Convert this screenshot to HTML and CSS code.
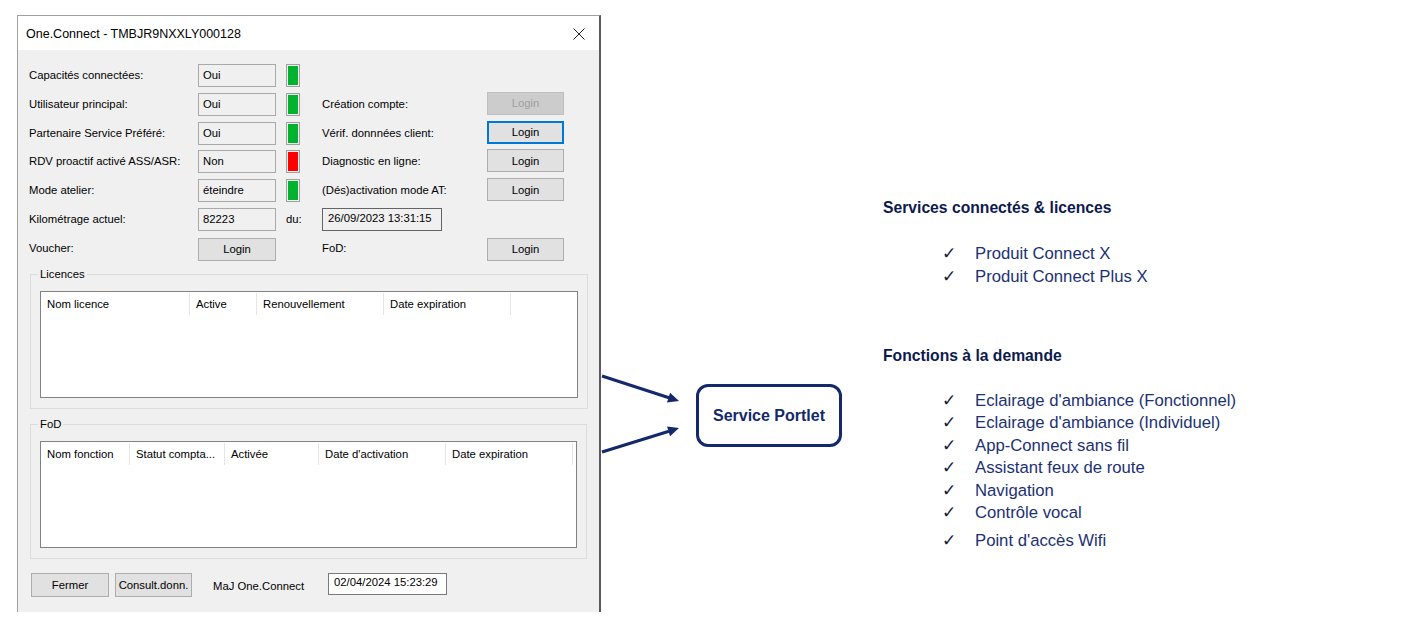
FILE: index.html
```html
<!DOCTYPE html>
<html lang="fr">
<head>
<meta charset="utf-8">
<title>One.Connect</title>
<link rel="stylesheet" href="styles.css">
</head>
<body>
<div class="page">
  <div class="window">
    <div class="titlebar">
      <span class="title">One.Connect - TMBJR9NXXLY000128</span>
      <svg class="close" width="12" height="12" viewBox="0 0 12 12"><path d="M0.5 0.5L11.5 11.5M11.5 0.5L0.5 11.5"/></svg>
    </div>
    <div class="content">
      <div class="form">
        <div class="lbl">Capacités connectées:</div>
        <div class="field">Oui</div>
        <div class="cell3"><span class="ind green"></span></div>
        <div></div><div></div>

        <div class="lbl">Utilisateur principal:</div>
        <div class="field">Oui</div>
        <div class="cell3"><span class="ind green"></span></div>
        <div class="lbl">Création compte:</div>
        <div><button class="btn disabled">Login</button></div>

        <div class="lbl">Partenaire Service Préféré:</div>
        <div class="field">Oui</div>
        <div class="cell3"><span class="ind green"></span></div>
        <div class="lbl">Vérif. donnnées client:</div>
        <div><button class="btn focus">Login</button></div>

        <div class="lbl">RDV proactif activé ASS/ASR:</div>
        <div class="field">Non</div>
        <div class="cell3"><span class="ind red"></span></div>
        <div class="lbl">Diagnostic en ligne:</div>
        <div><button class="btn">Login</button></div>

        <div class="lbl">Mode atelier:</div>
        <div class="field">éteindre</div>
        <div class="cell3"><span class="ind green"></span></div>
        <div class="lbl">(Dés)activation mode AT:</div>
        <div><button class="btn">Login</button></div>

        <div class="lbl">Kilométrage actuel:</div>
        <div class="field">82223</div>
        <div class="cell3 lbl">du:</div>
        <div><span class="datebox">26/09/2023 13:31:15</span></div>
        <div></div>

        <div class="lbl">Voucher:</div>
        <div><button class="btn wide">Login</button></div>
        <div></div>
        <div class="lbl">FoD:</div>
        <div><button class="btn lowrow">Login</button></div>
      </div>

      <fieldset class="group first">
        <legend>Licences</legend>
        <div class="list">
          <div class="lhead lic">
            <span>Nom licence</span><span>Active</span><span>Renouvellement</span><span>Date expiration</span>
          </div>
        </div>
      </fieldset>

      <fieldset class="group second">
        <legend>FoD</legend>
        <div class="list">
          <div class="lhead fod">
            <span>Nom fonction</span><span>Statut compta...</span><span>Activée</span><span>Date d'activation</span><span>Date expiration</span>
          </div>
        </div>
      </fieldset>

      <div class="bottom">
        <button class="btn b1">Fermer</button>
        <button class="btn b2">Consult.donn.</button>
        <span class="majlbl">MaJ One.Connect</span>
        <span class="datebox white">02/04/2024 15:23:29</span>
      </div>
    </div>
  </div>

  <div class="diagram">
    <svg class="arrows" width="95" height="90" viewBox="0 0 95 90">
      <line x1="1" y1="6" x2="68" y2="27.8"/>
      <polygon points="78,31 66,32.4 69.1,22.8"/>
      <line x1="1" y1="82" x2="68" y2="61.2"/>
      <polygon points="78,58 69.1,66.2 66,56.6"/>
    </svg>
    <div class="portlet">Service Portlet</div>
  </div>

  <div class="notes">
    <h2 class="heading">Services connectés &amp; licences</h2>
    <ul class="checks">
      <li><span class="tick">✓</span>Produit Connect X</li>
      <li><span class="tick">✓</span>Produit Connect Plus X</li>
    </ul>
    <h2 class="heading h2b">Fonctions à la demande</h2>
    <ul class="checks tight">
      <li><span class="tick">✓</span>Eclairage d'ambiance (Fonctionnel)</li>
      <li><span class="tick">✓</span>Eclairage d'ambiance (Individuel)</li>
      <li><span class="tick">✓</span>App-Connect sans fil</li>
      <li><span class="tick">✓</span>Assistant feux de route</li>
      <li><span class="tick">✓</span>Navigation</li>
      <li><span class="tick">✓</span>Contrôle vocal</li>
      <li class="last"><span class="tick">✓</span>Point d'accès Wifi</li>
    </ul>
  </div>
</div>
</body>
</html>
```

FILE: styles.css
```css
* { box-sizing: border-box; }
html, body { margin: 0; padding: 0; background: #ffffff; }
body { width: 1419px; height: 634px; overflow: hidden; }

.page {
  display: flex;
  align-items: flex-start;
  padding: 15px 0 0 17px;
}

/* ---------- dialog window ---------- */
.window {
  width: 584px;
  height: 597px;
  border-left: 1px solid #a0a0a0;
  border-top: 1px solid #a0a0a0;
  border-right: 2px solid #5a5a5a;
  display: flex;
  flex-direction: column;
  font-family: "Liberation Sans", Arial, sans-serif;
  font-size: 11.3px;
  color: #000;
}
.titlebar {
  height: 34px;
  flex: none;
  background: #fff;
  display: flex;
  align-items: center;
  justify-content: space-between;
  padding: 2px 14px 0 8px;
}
.title { font-size: 12.5px; color: #000; }
.close { stroke: #222; stroke-width: 1; fill: none; }

.content {
  flex: 1;
  background: #f0f0f0;
  padding-top: 14px;
}

.form {
  display: grid;
  grid-template-columns: 169px 78px 46px 165px 77px;
  grid-auto-rows: 28.8px;
  margin-left: 11px;
}
.lbl { line-height: 23px; white-space: nowrap; }
.field {
  height: 23px;
  border: 1px solid #a9a9a9;
  background: #f0f0f0;
  line-height: 20px;
  padding-left: 4px;
}
.cell3 { padding-left: 10px; }
.ind {
  display: block;
  width: 14px;
  height: 23px;
  border: 1px solid #a0a0a0;
  padding: 1px;
  background-clip: content-box;
}
.ind.green { background-color: #00b22d; }
.ind.red { background-color: #ff0000; }

.btn {
  font-family: "Liberation Sans", Arial, sans-serif;
  font-size: 11.3px;
  color: #000;
  width: 77px;
  height: 23px;
  margin: -1px 0 0 0;
  padding: 0;
  background: #e1e1e1;
  border: 1px solid #adadad;
  border-radius: 0;
}
.btn.wide { width: 78px; margin-top: 1px; }
.btn.lowrow { margin-top: 1px; }
.btn.disabled { background: #cccccc; border-color: #bfbfbf; color: #a0a0a0; }
.btn.focus { border: 2px solid #0078d7; }

.datebox {
  display: inline-block;
  width: 120px;
  height: 23px;
  border: 1px solid #646464;
  line-height: 19px;
  padding-left: 5px;
  white-space: nowrap;
}
.datebox.white { background: #fff; border-color: #7a7a7a; width: 119px; height: 22px; line-height: 17px; }

/* ---------- group boxes ---------- */
.group {
  margin: 2px 0 0 12px;
  width: 558px;
  border: 1px solid #dcdcdc;
  padding: 10px 9px 10px 9px;
  min-width: 0;
}
.group.second { margin-top: 9px; width: 557px; }
.group legend {
  padding: 0 2px;
  margin-left: -2px;
  line-height: 13px;
  font-size: 11.3px;
}
.list {
  height: 107px;
  border: 1px solid #828282;
  background: #fff;
}
.lhead { display: flex; height: 23px; }
.lhead span {
  line-height: 22px;
  padding-left: 6px;
  border-right: 1px solid #e5e5e5;
  margin-top: 1px;
  white-space: nowrap;
  overflow: hidden;
}
.lic span:nth-child(1) { width: 149px; }
.lic span:nth-child(2) { width: 67px; }
.lic span:nth-child(3) { width: 127px; }
.lic span:nth-child(4) { width: 127px; }
.fod span:nth-child(1) { width: 89px; }
.fod span:nth-child(2) { width: 95px; }
.fod span:nth-child(3) { width: 94px; }
.fod span:nth-child(4) { width: 127px; }
.fod span:nth-child(5) { width: 127px; }

/* ---------- bottom bar ---------- */
.bottom {
  display: flex;
  align-items: flex-start;
  margin: 14px 0 0 13px;
}
.bottom .btn { height: 24px; margin: 0; }
.b1 { width: 78px; }
.b2 { width: 77px; margin-left: 6px !important; }
.majlbl { margin-left: 21px; width: 115px; line-height: 26px; }

/* ---------- diagram ---------- */
.diagram {
  display: flex;
  align-items: center;
  margin-top: 355px;
}
.arrows line { stroke: #13296b; stroke-width: 3; }
.arrows polygon { fill: #13296b; }
.portlet {
  width: 146px;
  height: 63px;
  border: 3px solid #13296b;
  border-radius: 12px;
  display: flex;
  align-items: center;
  justify-content: center;
  font-family: "Liberation Sans", Arial, sans-serif;
  font-weight: bold;
  font-size: 16px;
  color: #13296b;
  padding-top: 1px;
}

/* ---------- notes ---------- */
.notes {
  margin: 183px 0 0 41px;
  font-family: "Liberation Sans", Arial, sans-serif;
  color: #1c3173;
}
.heading {
  margin: 0;
  font-size: 15.7px;
  font-weight: bold;
  line-height: 20px;
  color: #0d1a4e;
}
.h2b { margin-top: 58.5px; }
.checks {
  list-style: none;
  margin: 23.5px 0 0 0;
  padding: 0 0 0 59px;
  font-size: 16.7px;
}
.checks li { line-height: 23px; white-space: nowrap; }
.checks.tight li { line-height: 22.6px; }
.checks li.last { margin-top: 5.4px; }
.tick {
  display: inline-block;
  width: 33px;
  line-height: 20px;
  font-family: "DejaVu Sans", sans-serif;
  font-size: 17px;
  color: #141c3c;
}
```
